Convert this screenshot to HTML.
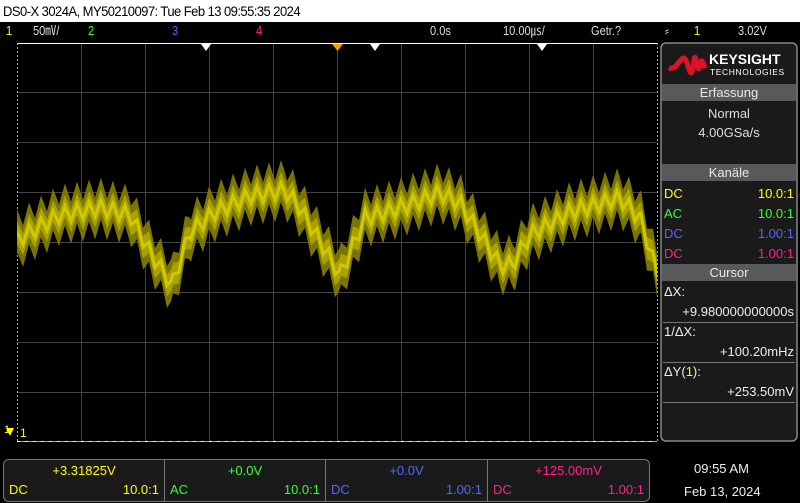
<!DOCTYPE html><html><head><style>
body{margin:0;width:800px;height:503px;background:#000;overflow:hidden;position:relative;font-family:"Liberation Sans",sans-serif}
.a{position:absolute;white-space:nowrap}
.top{left:0;top:0;width:800px;height:22px;background:#fff;color:#000;font-size:14px;line-height:22px;letter-spacing:-0.6px}
.cb{font-size:13px;top:23px;line-height:16px;transform:scaleX(.85);transform-origin:left}
.ph{position:absolute;left:662px;width:134px;height:17px;background:#58595b;color:#e8e8e8;font-size:13px;text-align:center;line-height:17px}
.r{font-size:13px;line-height:16px}
.cell{position:absolute;top:460px;height:40px;font-size:13px}
.cell .v{position:absolute;top:3px;left:0;right:0;text-align:center}
.cell .l{position:absolute;top:22px;left:5px}
.cell .rr{position:absolute;top:22px;right:5px}
</style></head><body>
<div class="a top"><span style="display:inline-block;transform:scaleX(.93);transform-origin:left">&nbsp;DS0-X 3024A, MY50210097: Tue Feb 13 09:55:35 2024</span></div>
<div class="a cb" style="left:6px;color:#ff0">1</div>
<div class="a cb" style="left:33px;color:#ddd">50㎷/</div>
<div class="a cb" style="left:88px;color:#3f3">2</div>
<div class="a cb" style="left:172px;color:#56f">3</div>
<div class="a cb" style="left:256px;color:#f28">4</div>
<div class="a cb" style="left:430px;color:#ddd">0.0s</div>
<div class="a cb" style="left:503px;color:#ddd">10.00㎲/</div>
<div class="a cb" style="left:591px;color:#ddd">Getr.?</div>
<div class="a cb" style="left:665px;color:#ddd">⸗</div>
<div class="a cb" style="left:694px;color:#ff0">1</div>
<div class="a cb" style="left:738px;color:#ddd">3.02V</div>
<svg class="a" style="left:0;top:0" width="800" height="503">
<defs><clipPath id="cp"><rect x="17" y="44" width="640" height="397"/></clipPath></defs>
<g stroke="#444" stroke-width="1">
<path id="g" d=""/>
</g>
<line x1="17" y1="43.5" x2="657" y2="43.5" stroke="#fff"/>
<line x1="17" y1="441.5" x2="657" y2="441.5" stroke="#fff"/>
<line x1="17.5" y1="43" x2="17.5" y2="441" stroke="#f90" stroke-dasharray="2,2"/>
<line x1="657.5" y1="43" x2="657.5" y2="441" stroke="#f90" stroke-dasharray="2,2"/>
<line x1="20" y1="441.5" x2="657" y2="441.5" stroke="#f90" stroke-dasharray="5,3"/>
<path d="M201 44h10l-5 7z M370 44h10l-5 7z M537 44h10l-5 7z" fill="#fff"/>
<path d="M332 44h11l-5.5 7z" fill="#f90"/>
<g clip-path="url(#cp)">
<path id="w1" fill="#7a7400"/>
<path id="w2" fill="#aaa200"/>
<path id="w3" fill="none" stroke="#d0c800" stroke-width="3"/>
</g>
<path d="M6 428h8l-4 8z" fill="#ff0"/>
<text x="4" y="433" fill="#ff0" font-size="11">1</text><text x="20" y="437" fill="#ff0" font-size="12">1</text>
<rect x="661" y="43" width="136" height="398" rx="5" fill="#1a1a1a" stroke="#888" stroke-width="1.5"/>
<path d="M669 68 C 675 70 678 62 681 60 C 684 56 686 58 688 66 C 690 74 692 78 694 60 C 696 48 698 80 700 64 C 702 56 704 66 705 68" fill="none" stroke="#e0102a" stroke-width="5"/>
<text x="709" y="64" fill="#fff" font-size="14" font-weight="bold">KEYSIGHT</text>
<text x="710" y="75" fill="#fff" font-size="8.5" letter-spacing=".6">TECHNOLOGIES</text>
<g stroke="#777"><line x1="663" y1="322.5" x2="795" y2="322.5"/><line x1="663" y1="362.5" x2="795" y2="362.5"/><line x1="663" y1="402.5" x2="795" y2="402.5"/></g>
<rect x="3.5" y="459.5" width="646" height="42" rx="5" fill="#1a1a1a" stroke="#777"/>
<g stroke="#777"><line x1="164.5" y1="460" x2="164.5" y2="501"/><line x1="325.5" y1="460" x2="325.5" y2="501"/><line x1="487.5" y1="460" x2="487.5" y2="501"/></g>
</svg>
<div class="ph" style="top:84px">Erfassung</div>
<div class="a" style="left:662px;width:134px;text-align:center;top:104px;color:#ddd;font-size:13px;line-height:19px">Normal<br>4.00GSa/s</div>
<div class="ph" style="top:164px">Kanäle</div>
<div class="a r" style="left:664px;top:184px;width:130px;line-height:20px">
<div style="color:#ff0">DC<span style="float:right">10.0:1</span></div>
<div style="color:#3f3">AC<span style="float:right">10.0:1</span></div>
<div style="color:#56f">DC<span style="float:right">1.00:1</span></div>
<div style="color:#f28">DC<span style="float:right">1.00:1</span></div></div>
<div class="ph" style="top:264px">Cursor</div>
<div class="a r" style="left:664px;top:284px;color:#eee">ΔX:</div>
<div class="a r" style="right:6px;top:304px;color:#eee">+9.980000000000s</div>
<div class="a r" style="left:664px;top:324px;color:#eee">1/ΔX:</div>
<div class="a r" style="right:6px;top:344px;color:#eee">+100.20mHz</div>
<div class="a r" style="left:664px;top:364px;color:#eee">ΔY(<span style="color:#ff0">1</span>):</div>
<div class="a r" style="right:6px;top:384px;color:#eee">+253.50mV</div>
<div class="cell" style="left:4px;width:160px;color:#ff0"><div class="v">+3.31825V</div><div class="l">DC</div><div class="rr">10.0:1</div></div>
<div class="cell" style="left:165px;width:160px;color:#3f3"><div class="v">+0.0V</div><div class="l">AC</div><div class="rr">10.0:1</div></div>
<div class="cell" style="left:326px;width:161px;color:#56f"><div class="v">+0.0V</div><div class="l">DC</div><div class="rr">1.00:1</div></div>
<div class="cell" style="left:488px;width:161px;color:#f28"><div class="v">+125.00mV</div><div class="l">DC</div><div class="rr">1.00:1</div></div>
<div class="a r" style="left:694px;top:461px;color:#eee">09:55 AM</div>
<div class="a r" style="left:684px;top:484px;color:#eee">Feb 13, 2024</div>
<script>
var d="";for(var x=81;x<657;x+=64)d+="M"+(x+.5)+" 44V441";for(var y=92;y<441;y+=50)d+="M17 "+(y+.5)+"H657";
d+="M337.5 44V441M17 242.5H657";
document.getElementById("g").setAttribute("d",d);
var P=[[17,240],[60,215],[100,208],[130,215],[150,252],[172,285],[190,232],[215,212],[250,196],[285,190],[300,208],[340,275],[365,218],[400,208],[440,193],[460,203],[500,265],[512,265],[530,235],[570,212],[620,198],[640,218],[657,272]];
function c(x){for(var i=1;i<P.length;i++)if(x<=P[i][0]){var a=P[i-1],b=P[i];return a[1]+(b[1]-a[1])*(x-a[0])/(b[0]-a[0]);}return P[P.length-1][1];}
function z(x){var ph=((x-17)%12)/12;var t=ph<.5?ph*2:2-ph*2;return (t-.5)*16;}
function band(h,amp){var up="",lo=[];for(var x=15;x<=659;x+=2){var y=c(x)+z(x)*amp;up+=(x==15?"M":"L")+x+" "+(y-h).toFixed(1);lo.push("L"+x+" "+(y+h).toFixed(1));}return up+lo.reverse().join("")+"Z";}
document.getElementById("w1").setAttribute("d",band(21,1.2));
document.getElementById("w2").setAttribute("d",band(11,1));
var s="";for(var x=15;x<=659;x+=2){s+=(x==15?"M":"L")+x+" "+(c(x)+z(x)).toFixed(1);}
document.getElementById("w3").setAttribute("d",s);
</script>
</body></html>
